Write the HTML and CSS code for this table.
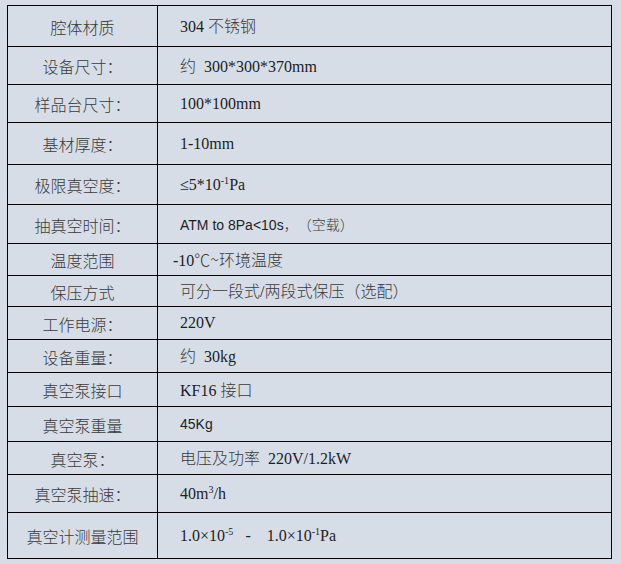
FILE: index.html
```html
<!DOCTYPE html>
<html lang="zh">
<head>
<meta charset="utf-8">
<title>规格参数</title>
<link rel="stylesheet" href="styles.css">
</head>
<body>
<div class="spec">
  <div class="k">腔体材质</div><div class="v"><span class="t">304 <span class="cn">不锈钢</span></span></div>
  <div class="k">设备尺寸：</div><div class="v"><span class="t"><span class="cn">约</span>  300*300*370mm</span></div>
  <div class="k">样品台尺寸：</div><div class="v"><span class="t">100*100mm</span></div>
  <div class="k">基材厚度：</div><div class="v"><span class="t">1-10mm</span></div>
  <div class="k">极限真空度：</div><div class="v"><span class="t">≤5*10<sup>-1</sup>Pa</span></div>
  <div class="k">抽真空时间：</div><div class="v sans"><span class="t">ATM to 8Pa&lt;10s<span class="cn">，（空载）</span></span></div>
  <div class="k">温度范围</div><div class="v shift"><span class="t">-10<span class="cn">℃~环境温度</span></span></div>
  <div class="k">保压方式</div><div class="v"><span class="t"><span class="cn">可分一段式</span>/<span class="cn">两段式保压（选配）</span></span></div>
  <div class="k">工作电源：</div><div class="v"><span class="t">220V</span></div>
  <div class="k">设备重量：</div><div class="v"><span class="t"><span class="cn">约</span>  30kg</span></div>
  <div class="k">真空泵接口</div><div class="v"><span class="t">KF16 <span class="cn">接口</span></span></div>
  <div class="k">真空泵重量</div><div class="v sans"><span class="t">45Kg</span></div>
  <div class="k">真空泵：</div><div class="v"><span class="t"><span class="cn">电压及功率</span>  220V/1.2kW</span></div>
  <div class="k">真空泵抽速：</div><div class="v"><span class="t">40m<sup>3</sup>/h</span></div>
  <div class="k">真空计测量范围</div><div class="v"><span class="t">1.0×10<sup>-5</sup>   -    1.0×10<sup>-1</sup>Pa</span></div>
</div>
</body>
</html>
```
FILE: styles.css
```css
html, body {
  margin: 0;
  padding: 0;
  background: #d6dde7;
}
body {
  width: 621px;
  height: 564px;
  overflow: hidden;
}
.spec {
  margin: 5px 0 0 7px;
  width: 605px;
  box-sizing: border-box;
  display: grid;
  grid-template-columns: 150px 454px;
  grid-template-rows: 41px 38px 38px 42px 40px 39px 32px 31px 33px 33px 34px 35px 33px 38px 46px;
  border-top: 1px solid #000;
  border-left: 1px solid #000;
}
.k, .v {
  box-sizing: border-box;
  border-right: 1px solid #000;
  border-bottom: 1px solid #000;
  display: flex;
  align-items: center;
  white-space: pre;
  text-spacing-trim: space-all;
}
.k {
  justify-content: center;
  font-family: "Noto Sans CJK SC", sans-serif;
  font-weight: 300;
  font-size: 16px;
  color: #3a3a3a;
  padding-top: 1px;
}
.v {
  padding-left: 22px;
  font-family: "Liberation Serif", "Noto Sans CJK SC", serif;
  font-size: 16px;
  color: #1e1e1e;
}
.v.shift {
  padding-left: 15px;
}
.v.sans {
  font-family: "Liberation Sans", "Noto Sans CJK SC", sans-serif;
  font-size: 14px;
}
.t {
  line-height: 20px;
}
.cn {
  font-family: "Noto Sans CJK SC", sans-serif;
  font-weight: 300;
  color: #3a3a3a;
  text-spacing-trim: space-all;
}
.sans .cn {
  font-size: 14px;
}
sup {
  font-size: 10px;
  line-height: 0;
  vertical-align: 6px;
}
```
